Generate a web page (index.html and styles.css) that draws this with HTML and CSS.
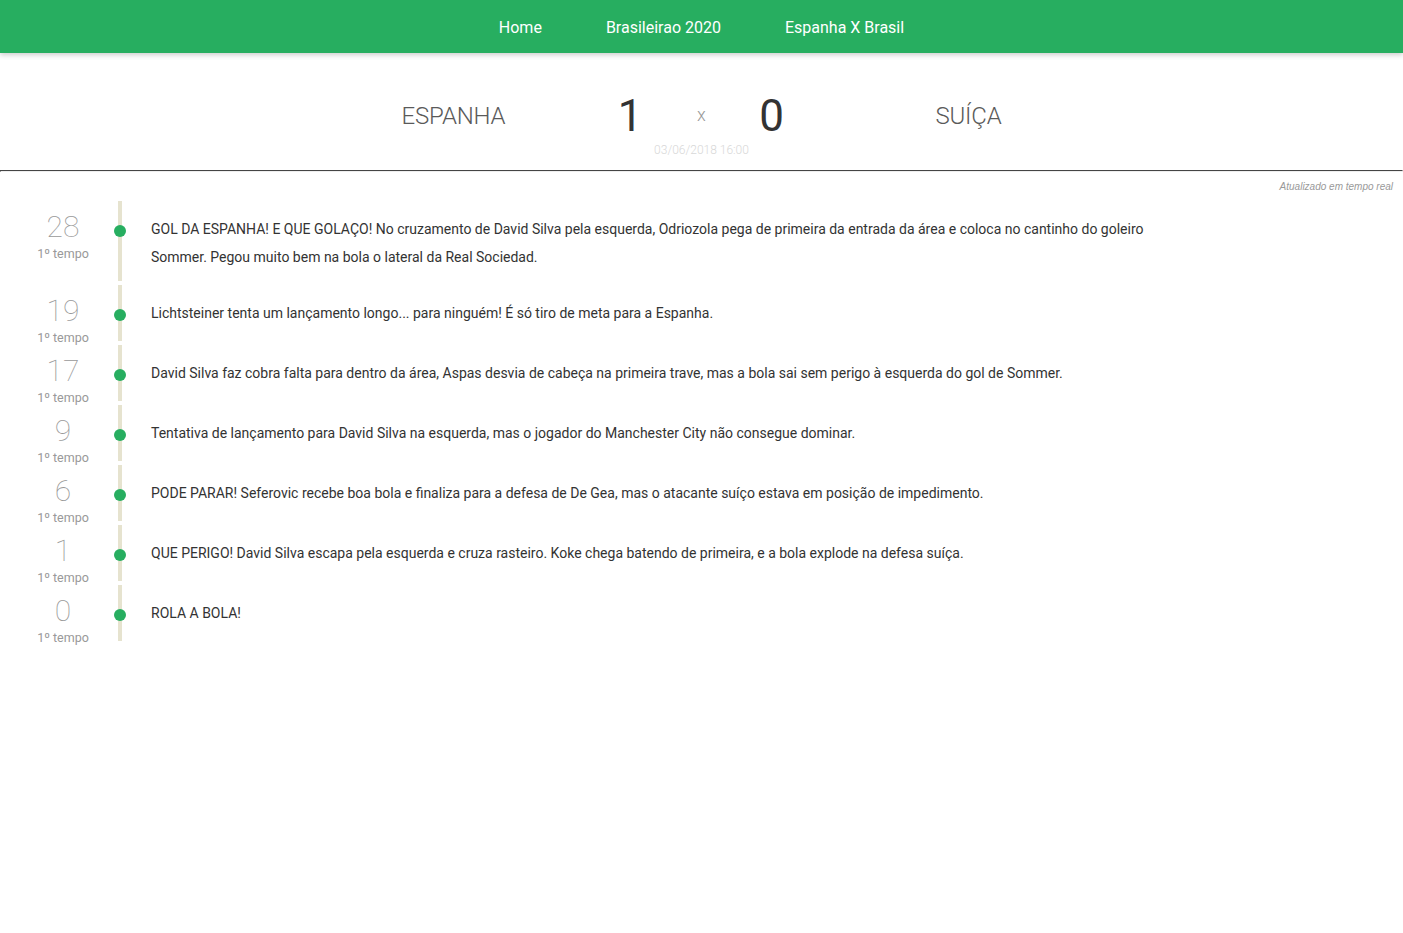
FILE: index.html
```html
<!DOCTYPE html>
<html lang="pt">
<head>
<meta charset="utf-8">
<title>Espanha x Suíça</title>
<link rel="stylesheet" href="styles.css">
</head>
<body>
<nav class="navbar">
  <a class="nav-link" href="#">Home</a>
  <a class="nav-link" href="#">Brasileirao 2020</a>
  <a class="nav-link" href="#">Espanha X Brasil</a>
</nav>
<header class="match">
  <div class="scoreboard">
    <div class="team team-home">ESPANHA</div>
    <div class="score score-home">1</div>
    <div class="versus">x</div>
    <div class="score">0</div>
    <div class="team team-away">SUÍÇA</div>
  </div>
  <div class="date">03/06/2018 16:00</div>
</header>
<hr class="divider">
<div class="status">Atualizado em tempo real</div>
<ul class="timeline">
  <li class="event">
    <div class="time"><span class="minute">28</span><span class="half">1º tempo</span></div>
    <div class="track"><span class="dot"></span></div>
    <p class="text">GOL DA ESPANHA! E QUE GOLAÇO! No cruzamento de David Silva pela esquerda, Odriozola pega de primeira da entrada da área e coloca no cantinho do goleiro Sommer. Pegou muito bem na bola o lateral da Real Sociedad.</p>
  </li>
  <li class="event">
    <div class="time"><span class="minute">19</span><span class="half">1º tempo</span></div>
    <div class="track"><span class="dot"></span></div>
    <p class="text">Lichtsteiner tenta um lançamento longo... para ninguém! É só tiro de meta para a Espanha.</p>
  </li>
  <li class="event">
    <div class="time"><span class="minute">17</span><span class="half">1º tempo</span></div>
    <div class="track"><span class="dot"></span></div>
    <p class="text">David Silva faz cobra falta para dentro da área, Aspas desvia de cabeça na primeira trave, mas a bola sai sem perigo à esquerda do gol de Sommer.</p>
  </li>
  <li class="event">
    <div class="time"><span class="minute">9</span><span class="half">1º tempo</span></div>
    <div class="track"><span class="dot"></span></div>
    <p class="text">Tentativa de lançamento para David Silva na esquerda, mas o jogador do Manchester City não consegue dominar.</p>
  </li>
  <li class="event">
    <div class="time"><span class="minute">6</span><span class="half">1º tempo</span></div>
    <div class="track"><span class="dot"></span></div>
    <p class="text">PODE PARAR! Seferovic recebe boa bola e finaliza para a defesa de De Gea, mas o atacante suíço estava em posição de impedimento.</p>
  </li>
  <li class="event">
    <div class="time"><span class="minute">1</span><span class="half">1º tempo</span></div>
    <div class="track"><span class="dot"></span></div>
    <p class="text">QUE PERIGO! David Silva escapa pela esquerda e cruza rasteiro. Koke chega batendo de primeira, e a bola explode na defesa suíça.</p>
  </li>
  <li class="event">
    <div class="time"><span class="minute">0</span><span class="half">1º tempo</span></div>
    <div class="track"><span class="dot"></span></div>
    <p class="text">ROLA A BOLA!</p>
  </li>
</ul>
</body>
</html>
```

FILE: styles.css
```css
* { box-sizing: border-box; }

body {
  margin: 0;
  font-family: Roboto, "Liberation Sans", Arial, sans-serif;
  background: #fff;
  color: #333;
}

.navbar {
  height: 53px;
  padding-top: 2px;
  background: #27ae60;
  display: flex;
  justify-content: center;
  align-items: center;
  box-shadow: 0 2px 5px rgba(0, 0, 0, 0.2);
}

.nav-link {
  color: #fff;
  text-decoration: none;
  font-size: 16px;
  padding: 0 32px;
  line-height: 51px;
}

.match {
  padding-top: 41px;
  height: 117px;
}

.scoreboard {
  width: 600px;
  margin: 0 auto;
  display: grid;
  grid-template-columns: 1fr 80px 60px 80px 1fr;
  align-items: center;
}

.team {
  font-size: 24px;
  line-height: 24px;
  font-weight: 300;
  color: #5a5a5a;
  letter-spacing: -0.2px;
}

.team-away { text-align: right; }

.score {
  font-size: 44px;
  line-height: 44px;
  font-weight: 400;
  color: #333;
  text-align: center;
}

.score-home { padding-right: 3px; }

.versus {
  font-size: 18px;
  line-height: 18px;
  font-weight: 300;
  color: #999;
  text-align: center;
  margin-top: -3px;
}

.date {
  text-align: center;
  font-size: 12px;
  line-height: 14px;
  font-weight: 300;
  color: #d8d8d8;
  margin-top: 5px;
}

.divider {
  margin: 0;
  border: 1px inset #eee;
  border-top-color: #999;
  border-left-color: #999;
}

.status {
  text-align: right;
  font-family: "Liberation Sans", Arial, sans-serif;
  font-style: italic;
  font-size: 10px;
  color: #999;
  padding: 9px 10px 0 0;
}

.timeline {
  list-style: none;
  margin: 0;
  padding: 0;
  margin-top: 9px;
}

.event {
  display: flex;
  align-items: stretch;
  margin-bottom: 4px;
  min-height: 56px;
}

.time {
  flex: none;
  align-self: flex-start;
  height: 56px;
  width: 126px;
  margin-right: -8px;
  display: flex;
  flex-direction: column;
  align-items: center;
  padding-top: 11px;
}

.minute {
  font-size: 30px;
  font-weight: 100;
  color: #999;
  line-height: 30px;
}

.half {
  font-size: 12.5px;
  color: #999;
  line-height: 16px;
  margin-top: 4px;
}

.track {
  flex: none;
  width: 4px;
  background: #e6e3cf;
  position: relative;
}

.dot {
  position: absolute;
  left: -4px;
  top: 24px;
  width: 12px;
  height: 12px;
  border-radius: 50%;
  background: #27ae60;
}

.text {
  margin: 0;
  padding: 14px 0 10px 29px;
  font-size: 14px;
  line-height: 28px;
  color: #333;
  width: 1030px;
}
```
